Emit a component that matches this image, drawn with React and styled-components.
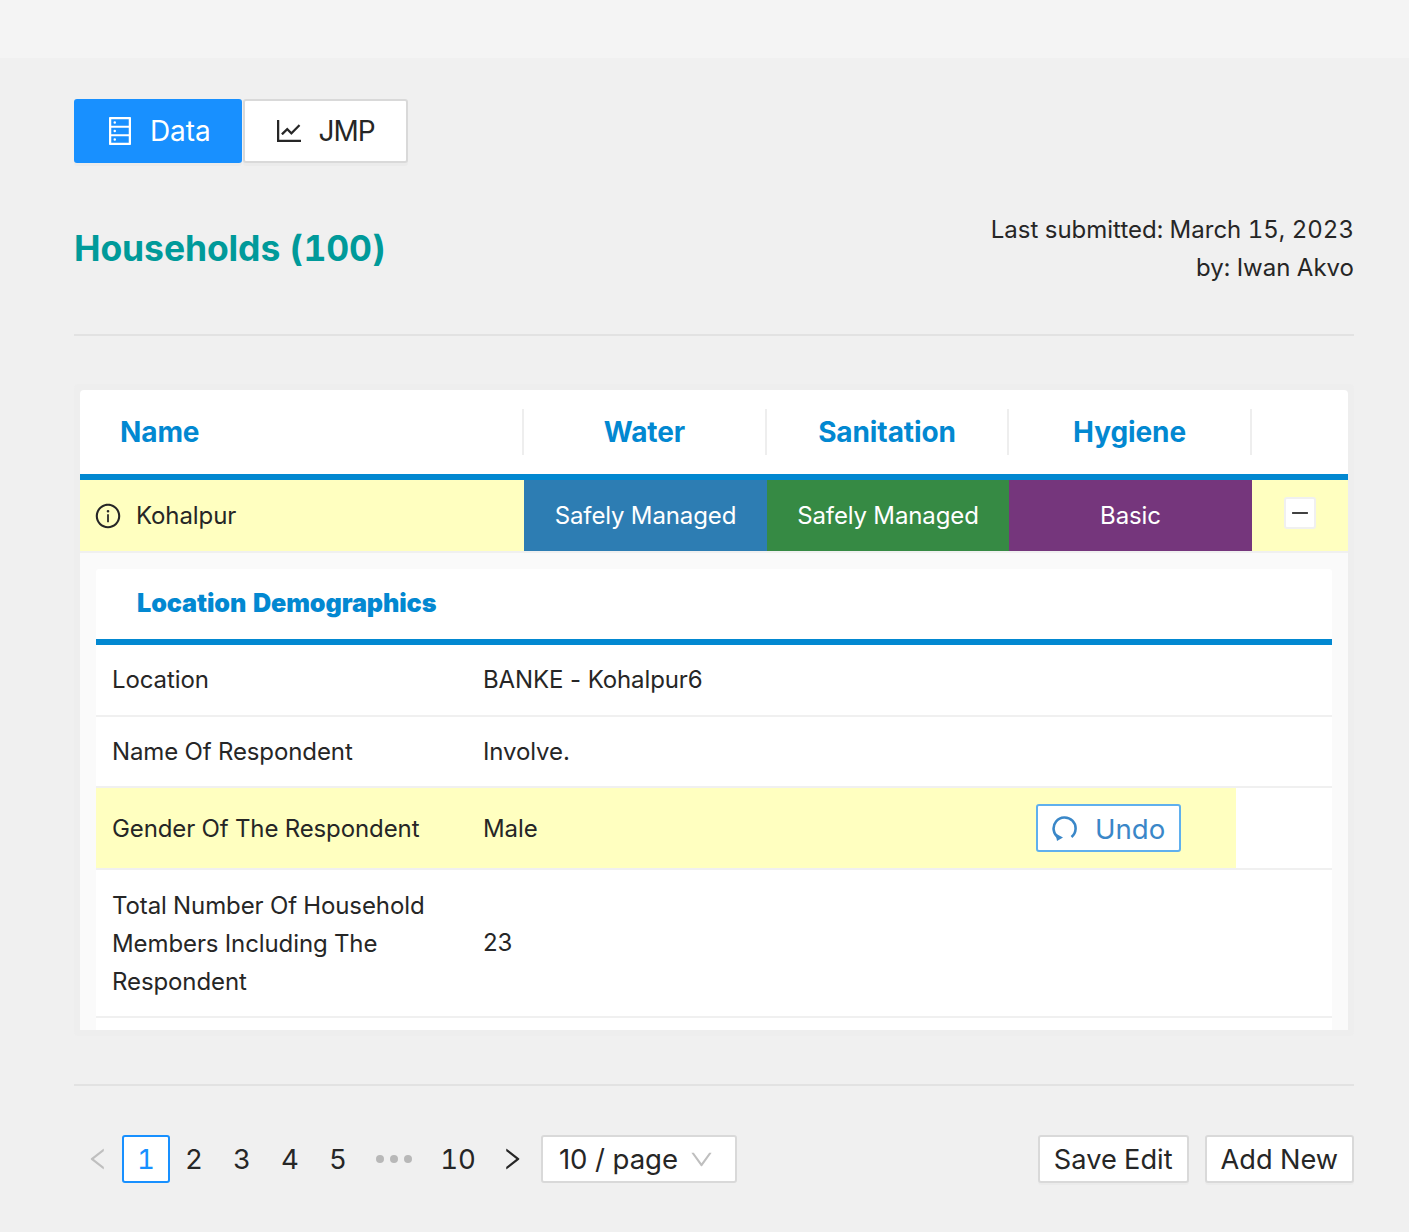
import React from "react";
import styled, { createGlobalStyle } from "styled-components";
import {
  AiOutlineDatabase,
  AiOutlineLineChart,
  AiOutlineInfoCircle,
  AiOutlineMinus,
  AiOutlineLeft,
  AiOutlineRight,
  AiOutlineDown,
} from "react-icons/ai";

const demographics = [
  { label: "Location", value: "BANKE - Kohalpur6" },
  { label: "Name Of Respondent", value: "Involve." },
  { label: "Gender Of The Respondent", value: "Male", edited: true },
  {
    label: "Total Number Of Household Members Including The Respondent",
    value: "23",
  },
];

const UndoIcon = () => (
  <svg width="26" height="26" viewBox="0 0 26 26" fill="none">
    <path
      d="M6.5 22.6 A11 11 0 1 1 19.5 22"
      stroke="currentColor"
      strokeWidth="2.6"
    />
    <path d="M3.5 18.5 L11 22.5 L5 26 Z" fill="currentColor" />
  </svg>
);

export default function App() {
  return (
    <>
      <GlobalStyle />
      <TopBar />
      <Main>
        <Tabs>
          <Tab $active>
            <AiOutlineDatabase />
            Data
          </Tab>
          <Tab $tight>
            <AiOutlineLineChart />
            JMP
          </Tab>
        </Tabs>

        <TitleRow>
          <Title>Households (100)</Title>
          <Submitted>
            <div>Last submitted: March 15, 2023</div>
            <div>by: Iwan Akvo</div>
          </Submitted>
        </TitleRow>

        <Card>
          <HeadRow>
            <NameHead>Name</NameHead>
            <ColHead>Water</ColHead>
            <ColHead>Sanitation</ColHead>
            <ColHead>Hygiene</ColHead>
            <ColHead />
          </HeadRow>
          <DataRow>
            <NameCell>
              <AiOutlineInfoCircle />
              Kohalpur
            </NameCell>
            <LevelCell $color="#2d7db3">Safely Managed</LevelCell>
            <LevelCell $color="#368a44">Safely Managed</LevelCell>
            <LevelCell $color="#75367c">Basic</LevelCell>
            <ExpandCell>
              <ExpandButton>
                <AiOutlineMinus />
              </ExpandButton>
            </ExpandCell>
          </DataRow>
          <Expanded>
            <Inner>
              <InnerHead>Location Demographics</InnerHead>
              {demographics.map((row) => (
                <InnerRow key={row.label}>
                  <InnerMain $edited={row.edited}>
                    <Label>{row.label}</Label>
                    <Value>{row.value}</Value>
                    <UndoCell>
                      {row.edited && (
                        <UndoButton>
                          <UndoIcon />
                          Undo
                        </UndoButton>
                      )}
                    </UndoCell>
                  </InnerMain>
                </InnerRow>
              ))}
              <InnerFoot />
            </Inner>
          </Expanded>
        </Card>

        <Footer>
          <Pager>
            <PageArrow $disabled>
              <AiOutlineLeft />
            </PageArrow>
            <PageNum $active>1</PageNum>
            <PageNum>2</PageNum>
            <PageNum>3</PageNum>
            <PageNum>4</PageNum>
            <PageNum>5</PageNum>
            <Dots>
              <Dot />
              <Dot />
              <Dot />
            </Dots>
            <PageNum>10</PageNum>
            <NextArrow>
              <AiOutlineRight />
            </NextArrow>
            <PageSize>
              10 / page
              <AiOutlineDown />
            </PageSize>
          </Pager>
          <Actions>
            <ActionButton>Save Edit</ActionButton>
            <ActionButton>Add New</ActionButton>
          </Actions>
        </Footer>
      </Main>
    </>
  );
}

const GlobalStyle = createGlobalStyle`
  * {
    box-sizing: border-box;
  }
  body {
    margin: 0;
    background: #f0f0f0;
    color: #262626;
    font-family: Inter, "Liberation Sans", sans-serif;
    font-size: 24px;
    font-variant-numeric: tabular-nums;
    letter-spacing: -0.1px;
    line-height: 38px;
  }
`;

const TopBar = styled.div`
  height: 58px;
  background: #f4f4f4;
`;

const Main = styled.main`
  padding: 41px 55px 48px 74px;
`;

const Tabs = styled.div`
  display: flex;
  gap: 1px;
`;

const Tab = styled.button`
  display: flex;
  align-items: center;
  gap: 14px;
  height: 64px;
  padding: 0 ${(p) => (p.$tight ? "31px" : "29px")} 0 28px;
  border: 2px solid ${(p) => (p.$active ? "#1890ff" : "#d9d9d9")};
  border-radius: 3px;
  background: ${(p) => (p.$active ? "#1890ff" : "#fff")};
  color: ${(p) => (p.$active ? "#fff" : "#262626")};
  box-shadow: 0 3px 0 rgba(0, 0, 0, 0.02);
  font: inherit;
  font-size: 28px;
  letter-spacing: ${(p) => (p.$tight ? "-1px" : "-0.1px")};

  svg {
    font-size: 32px;
  }
`;

const TitleRow = styled.div`
  display: flex;
  justify-content: space-between;
  align-items: center;
  margin-top: 48px;
  padding-bottom: 47px;
  border-bottom: 2px solid #e2e2e2;
`;

const Title = styled.h1`
  margin: 0;
  color: #009a9a;
  font-size: 35.5px;
  font-weight: 700;
  line-height: 46px;
`;

const Submitted = styled.div`
  letter-spacing: 0;
  text-align: right;
`;

const Card = styled.section`
  margin-top: 48px;
  padding: 6px;
  border-radius: 4px;
  background: #eeeeee;
`;

const HeadRow = styled.div`
  display: grid;
  grid-template-columns: 444px 243px 242px 243px 96px;
  align-items: center;
  height: 90px;
  border-bottom: 6px solid #0288d1;
  border-radius: 4px 4px 0 0;
  background: #fff;
`;

const ColHead = styled.div`
  display: flex;
  align-items: center;
  justify-content: center;
  height: 46px;
  border-right: 2px solid #eeeeee;
  color: #0288d1;
  font-size: 28px;
  font-weight: 700;

  &:last-child {
    border-right: 0;
  }
`;

const NameHead = styled(ColHead)`
  justify-content: flex-start;
  padding-left: 40px;
`;

const DataRow = styled.div`
  display: grid;
  grid-template-columns: 444px 243px 242px 243px 96px;
  height: 73px;
  border-bottom: 2px solid #f0f0f0;
  background: #ffffc0;
`;

const NameCell = styled.div`
  display: flex;
  align-items: center;
  gap: 14px;
  padding-left: 14px;

  svg {
    font-size: 28px;
  }
`;

const LevelCell = styled.div`
  display: flex;
  align-items: center;
  justify-content: center;
  background: ${(p) => p.$color};
  color: #fff;
`;

const ExpandCell = styled.div`
  display: flex;
  align-items: center;
  justify-content: center;
  padding-bottom: 6px;
`;

const ExpandButton = styled.button`
  display: flex;
  align-items: center;
  justify-content: center;
  width: 32px;
  height: 32px;
  padding: 0;
  border: 2px solid #f0f0f0;
  border-radius: 3px;
  background: #fff;
  color: #000;

  svg {
    font-size: 22px;
  }
`;

const Expanded = styled.div`
  padding: 16px 16px 0;
  background: #fafafa;
`;

const Inner = styled.div`
  border-radius: 3px 3px 0 0;
  background: #fff;
`;

const InnerHead = styled.div`
  display: flex;
  align-items: center;
  height: 76px;
  padding: 0 0 2px 41px;
  border-bottom: 6px solid #0288d1;
  color: #0288d1;
  font-size: 25.2px;
  font-weight: 900;
`;

const InnerRow = styled.div`
  border-bottom: 2px solid #f0f0f0;
`;

const InnerMain = styled.div`
  display: grid;
  grid-template-columns: 371px 553px 216px;
  align-items: center;
  width: 1140px;
  min-height: ${(p) => (p.$edited ? "80px" : "0")};
  background: ${(p) => (p.$edited ? "#ffffc0" : "transparent")};
`;

const Label = styled.div`
  padding: 16.15px 16px 15.55px;
`;

const Value = styled.div`
  padding: 0.3px 16px 0;
  font-variant-numeric: normal;
`;

const UndoCell = styled.div`
  padding: 0 16px;
`;

const UndoButton = styled.button`
  display: flex;
  align-items: center;
  gap: 17px;
  height: 48px;
  padding: 2px 14px 0;
  border: 2px solid #5fb0ee;
  border-radius: 3px;
  background: #fff;
  color: #3a87c8;
  font: inherit;
  font-size: 27.6px;

  svg {
    margin-top: -2px;
  }
`;

const InnerFoot = styled.div`
  height: 12px;
`;

const Footer = styled.div`
  display: flex;
  justify-content: space-between;
  align-items: center;
  margin-top: 48px;
  padding-top: 49px;
  border-top: 2px solid #e2e2e2;
`;

const Pager = styled.div`
  display: flex;
  align-items: center;
  font-size: 27.6px;
`;

const PageNum = styled.div`
  display: flex;
  align-items: center;
  justify-content: center;
  width: 48px;
  height: 48px;
  border: 2px solid ${(p) => (p.$active ? "#1890ff" : "transparent")};
  border-radius: 3px;
  background: ${(p) => (p.$active ? "#fff" : "transparent")};
  color: ${(p) => (p.$active ? "#1890ff" : "#262626")};
`;

const PageArrow = styled.div`
  display: flex;
  align-items: center;
  justify-content: center;
  width: 48px;
  height: 48px;
  color: ${(p) => (p.$disabled ? "#bfbfbf" : "#262626")};
  font-size: 28px;
`;

const NextArrow = styled(PageArrow)`
  margin-left: 6px;
`;

const Dots = styled.div`
  display: flex;
  align-items: center;
  justify-content: center;
  gap: 6px;
  width: 72px;
  padding-right: 8px;
`;

const Dot = styled.span`
  width: 8px;
  height: 8px;
  border-radius: 50%;
  background: #b8b8b8;
`;

const PageSize = styled.div`
  display: flex;
  align-items: center;
  justify-content: space-between;
  width: 196px;
  height: 48px;
  margin-left: 5px;
  padding: 0 20px 0 16px;
  border: 2px solid #d9d9d9;
  border-radius: 3px;
  background: #fff;
  font-variant-numeric: normal;

  svg {
    color: #bfbfbf;
    font-size: 27px;
  }
`;

const Actions = styled.div`
  display: flex;
  gap: 16px;
`;

const ActionButton = styled.button`
  height: 48px;
  padding: 2px 14px 0;
  border: 2px solid #d9d9d9;
  border-radius: 3px;
  background: #fff;
  box-shadow: 0 2px 0 rgba(0, 0, 0, 0.02);
  color: #262626;
  font: inherit;
  font-size: 27.2px;
`;
